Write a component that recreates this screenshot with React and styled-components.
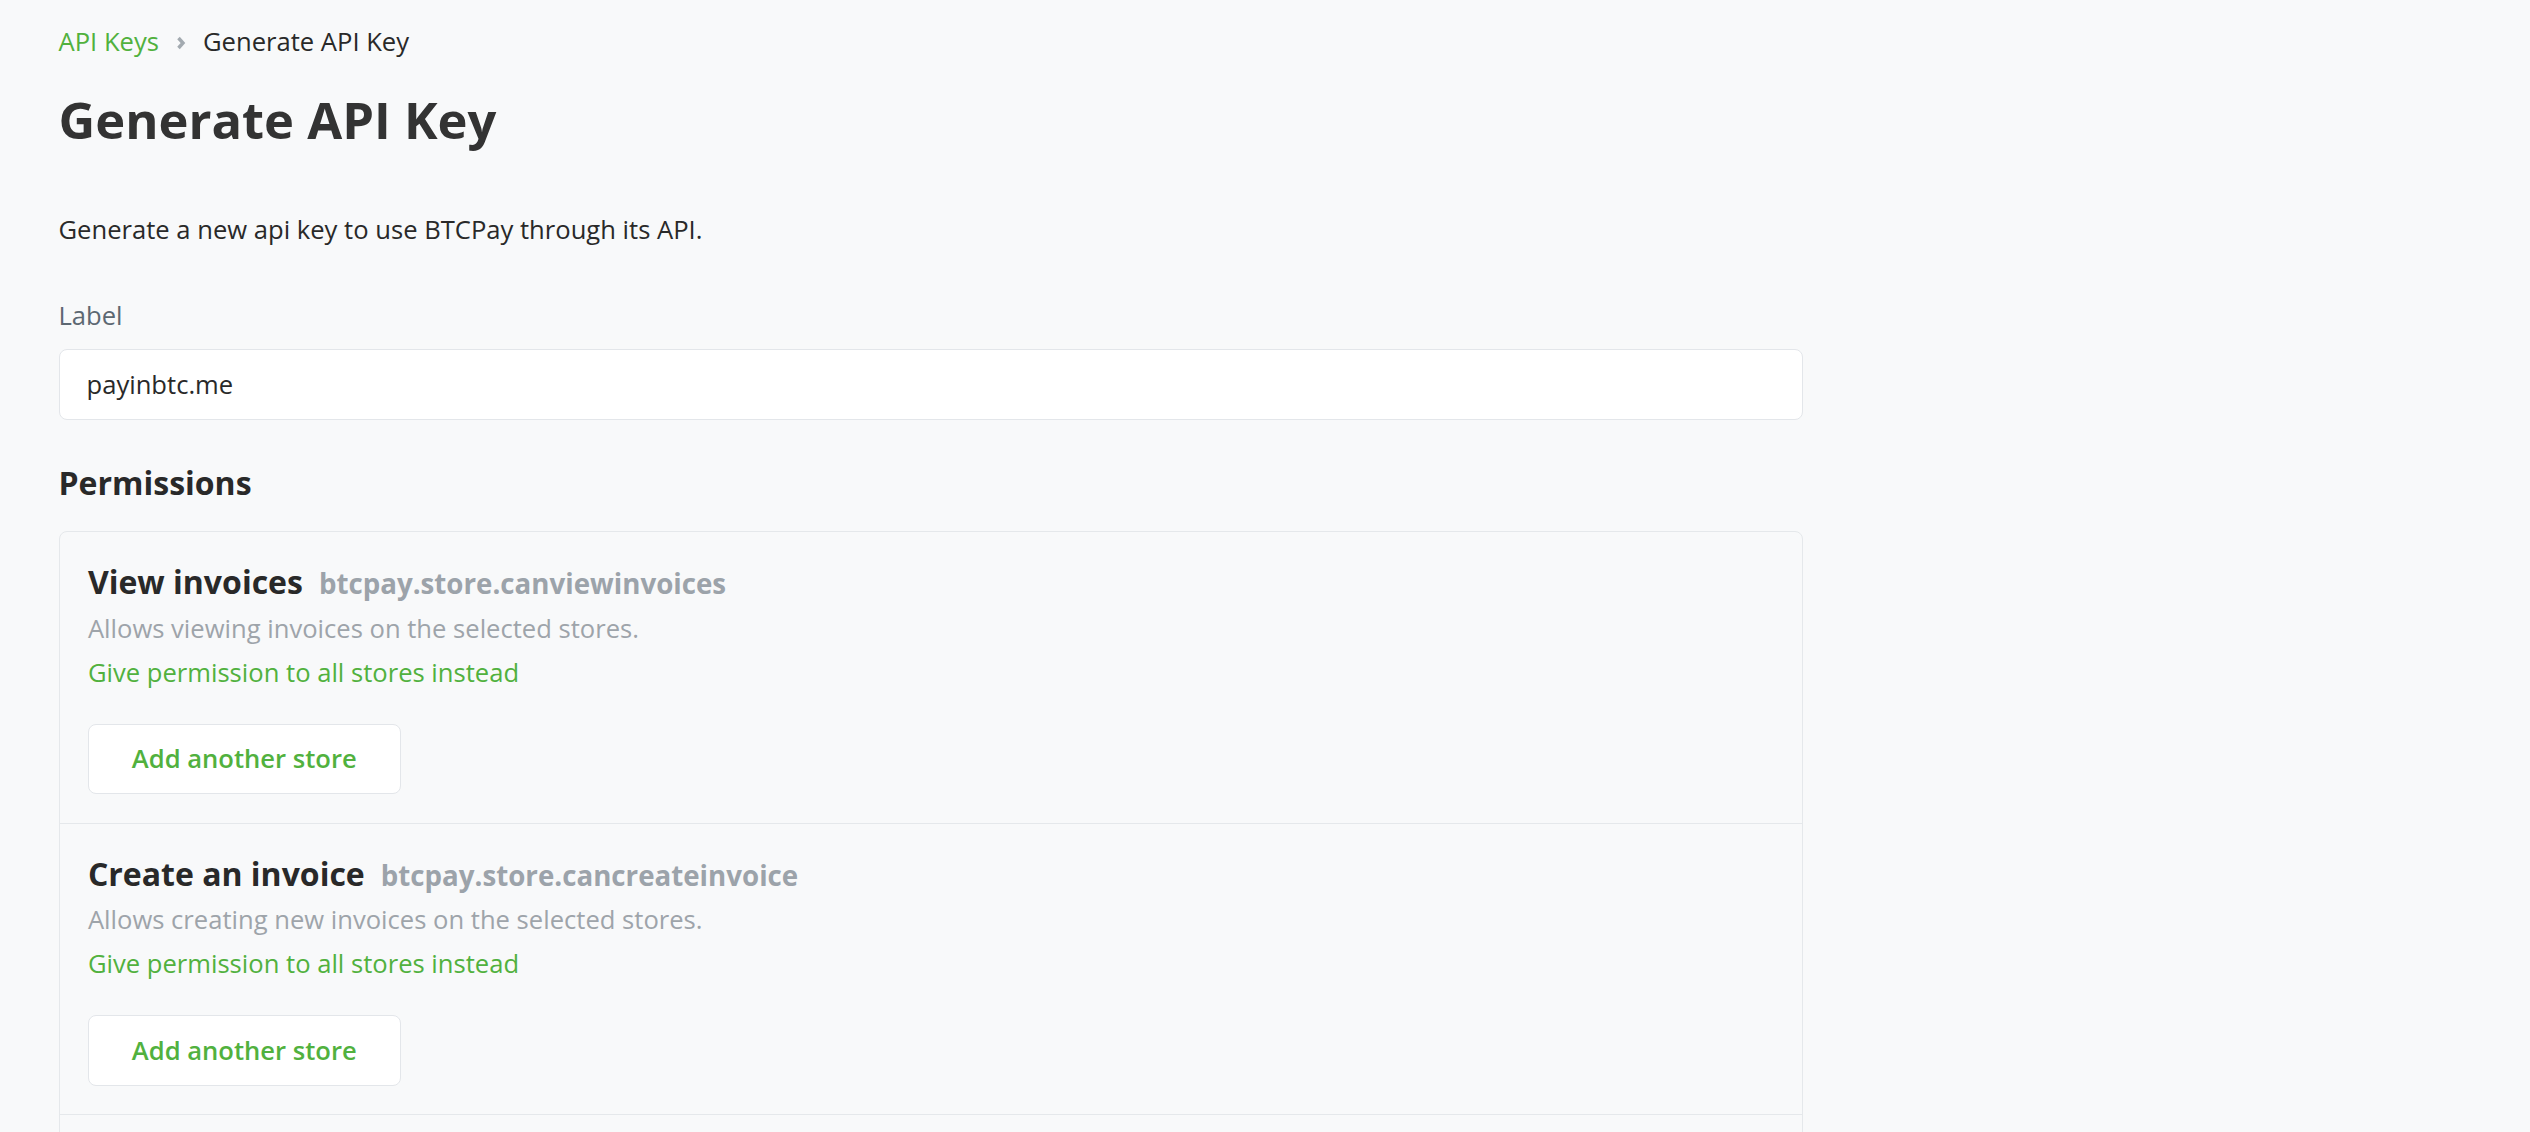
import React from 'react';
import styled, { createGlobalStyle } from 'styled-components';

const GlobalStyle = createGlobalStyle`
  html, body {
    margin: 0;
    padding: 0;
    background: #f8f9fa;
  }
  body {
    font-family: "Open Sans", "Liberation Sans", sans-serif;
    color: #292929;
  }
`;

const permissions = [
  {
    title: 'View invoices',
    code: 'btcpay.store.canviewinvoices',
    description: 'Allows viewing invoices on the selected stores.',
  },
  {
    title: 'Create an invoice',
    code: 'btcpay.store.cancreateinvoice',
    description: 'Allows creating new invoices on the selected stores.',
  },
  {
    title: 'Modify invoices',
    code: 'btcpay.store.canmodifyinvoices',
    description: 'Allows viewing, modifying, deleting and creating new invoices on the selected stores.',
  },
];

const Chevron = () => (
  <svg width="10" height="14" viewBox="0 0 10 14">
    <polyline points="2.5,2 7,7 2.5,12" fill="none" stroke="#a3aab0" strokeWidth="3.4" />
  </svg>
);

const App = () => {
  return (
    <>
      <GlobalStyle />
      <Page>
        <Breadcrumb>
          <Crumb href="#">API Keys</Crumb>
          <Chevron />
          <Current>Generate API Key</Current>
        </Breadcrumb>
        <Title>Generate API Key</Title>
        <Lead>Generate a new api key to use BTCPay through its API.</Lead>
        <Label htmlFor="label">Label</Label>
        <Input id="label" defaultValue="payinbtc.me" />
        <Heading>Permissions</Heading>
        <Card>
          {permissions.map((p) => (
            <Section key={p.code}>
              <SectionHead>
                <SectionTitle>{p.title}</SectionTitle>
                <Code>{p.code}</Code>
              </SectionHead>
              <Description>{p.description}</Description>
              <Link href="#">Give permission to all stores instead</Link>
              <AddButton type="button">Add another store</AddButton>
            </Section>
          ))}
        </Card>
      </Page>
    </>
  );
};

const Page = styled.div`
  width: 1744px;
  padding: 22.5px 0 0 58.5px;
  display: flex;
  flex-direction: column;
  align-items: flex-start;
`;

const Breadcrumb = styled.nav`
  display: flex;
  align-items: center;
  gap: 17px;
  font-size: 25.6px;
  line-height: 1.5;
  svg {
    margin-top: 3px;
  }
`;

const Crumb = styled.a`
  color: #51b13e;
  text-decoration: none;
`;

const Current = styled.span`
  color: #292929;
`;

const Title = styled.h1`
  margin: 29.5px 0 0;
  font-size: 50.7px;
  line-height: 1.2;
  font-weight: 700;
  color: #333;
`;

const Lead = styled.p`
  margin: 60.2px 0 0;
  font-size: 25.6px;
  line-height: 1.5;
  color: #292929;
`;

const Label = styled.label`
  margin-top: 46.9px;
  font-size: 25.6px;
  line-height: 1.5;
  color: #5d6872;
`;

const Input = styled.input`
  box-sizing: border-box;
  width: 100%;
  height: 71px;
  margin-top: 14.1px;
  padding: 0 27px;
  background: #fff;
  border: 1.6px solid #e3e6ea;
  border-radius: 8px;
  font-family: inherit;
  font-size: 25.6px;
  color: #292929;
  outline: none;
`;

const Heading = styled.h3`
  margin: 43.9px 0 0;
  font-size: 32px;
  line-height: 1.2;
  font-weight: 700;
  color: #292929;
`;

const Card = styled.div`
  box-sizing: border-box;
  width: 100%;
  margin-top: 28.5px;
  border: 1.6px solid #e5e8eb;
  border-radius: 8px;
`;

const Section = styled.div`
  display: flex;
  flex-direction: column;
  align-items: flex-start;
  padding: 31.3px 28.4px 28.4px;
  border-bottom: 1.6px solid #e5e8eb;
  &:last-child {
    border-bottom: none;
  }
`;

const SectionHead = styled.div`
  display: flex;
  align-items: baseline;
  gap: 16px;
`;

const SectionTitle = styled.h5`
  margin: 0;
  font-size: 32px;
  line-height: 1.2;
  font-weight: 700;
  color: #292929;
`;

const Code = styled.span`
  font-size: 27.7px;
  font-weight: 700;
  color: #9ca3aa;
`;

const Description = styled.p`
  margin: 7.4px 0 0;
  font-size: 25.6px;
  line-height: 1.5;
  color: #9ea4aa;
`;

const Link = styled.a`
  margin-top: 5.5px;
  font-size: 25.6px;
  line-height: 1.5;
  color: #51b13e;
  text-decoration: none;
`;

const AddButton = styled.button`
  box-sizing: border-box;
  margin-top: 31.6px;
  height: 70.6px;
  padding: 0 42.9px;
  background: #fff;
  border: 1.6px solid #e3e6ea;
  border-radius: 8px;
  font-family: inherit;
  font-size: 25.6px;
  font-weight: 600;
  color: #51b13e;
  cursor: pointer;
`;

export default App;
